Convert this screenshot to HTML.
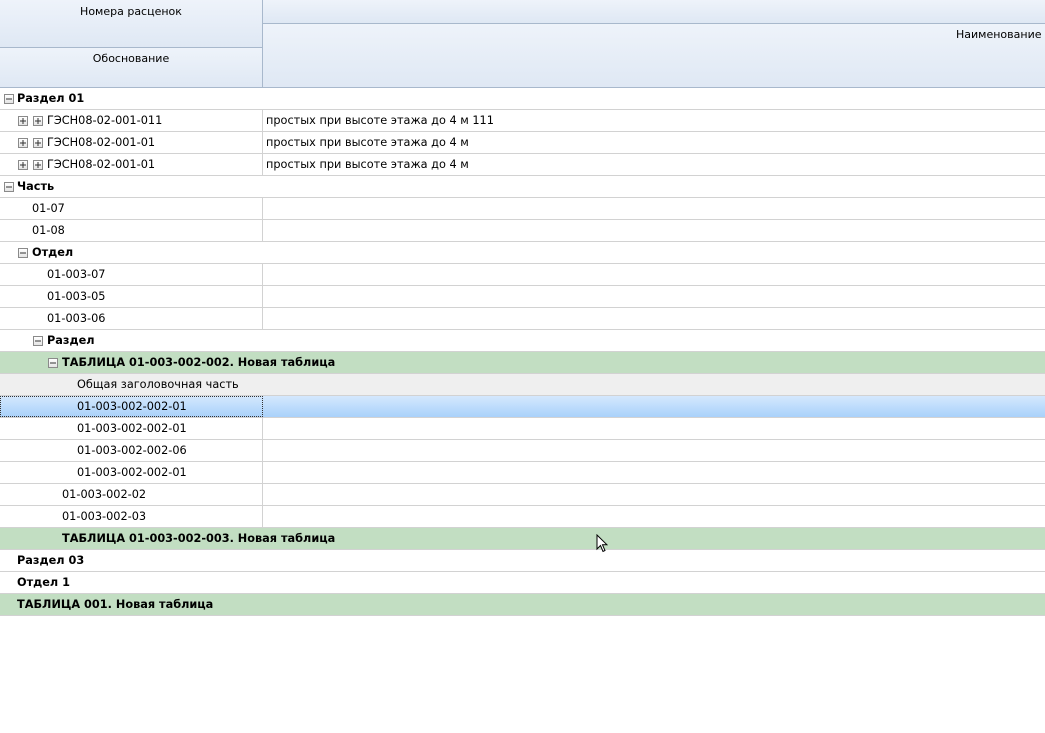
<!DOCTYPE html>
<html><head><meta charset="utf-8"><style>
*{margin:0;padding:0;box-sizing:border-box}
body{width:1045px;height:733px;background:#fff;font-family:"DejaVu Sans","Liberation Sans",sans-serif;font-size:11.3px;color:#000;position:relative;overflow:hidden}
.h{position:absolute;background:linear-gradient(#eef3fa,#dfe8f4);}
.r{position:absolute;left:0;width:1045px;height:22px;border-bottom:1px solid #d2d2d2;line-height:21px;white-space:nowrap}
.d{position:absolute;left:262px;top:0;width:1px;height:21px;background:#d2d2d2}
.b{font-weight:bold}
.t{position:absolute;top:0}
.i{position:absolute;top:6px;width:10px;height:10px;border:1px solid #8a8a8a;background:linear-gradient(#fff,#e4e4e4)}
.i:before{content:"";position:absolute;left:1px;top:3px;width:6px;height:2px;background:#333;transform:scaleY(.5)}
.p:after{content:"";position:absolute;left:3px;top:1px;width:2px;height:6px;background:#333;transform:scaleX(.5)}
.g{background:#c2dec2}
.hl{position:absolute;font-size:11px}
</style></head><body>
<div class="h" style="left:0;top:0;width:262px;height:48px;border-bottom:1px solid #a8b8cc"></div>
<div class="h" style="left:0;top:48px;width:262px;height:40px;border-bottom:1px solid #a8b8cc"></div>
<div class="h" style="left:262px;top:0;width:783px;height:24px;border-left:1px solid #a8b8cc;border-bottom:1px solid #a8b8cc"></div>
<div class="h" style="left:262px;top:24px;width:783px;height:64px;border-left:1px solid #a8b8cc;border-bottom:1px solid #a8b8cc"></div>
<div class="hl" style="left:0;width:262px;top:5px;text-align:center">Номера расценок</div>
<div class="hl" style="left:0;width:262px;top:52px;text-align:center">Обоснование</div>
<div class="hl" style="left:956px;top:28px">Наименование</div>

<div class="r" style="top:88px"><span class="i" style="left:4px"></span><span class="t b" style="left:17px">Раздел 01</span></div>
<div class="r" style="top:110px"><span class="i p" style="left:18px"></span><span class="i p" style="left:33px"></span><span class="t" style="left:47px">ГЭСН08-02-001-011</span><div class="d"></div><span class="t" style="left:266px">простых при высоте этажа до 4 м 111</span></div>
<div class="r" style="top:132px"><span class="i p" style="left:18px"></span><span class="i p" style="left:33px"></span><span class="t" style="left:47px">ГЭСН08-02-001-01</span><div class="d"></div><span class="t" style="left:266px">простых при высоте этажа до 4 м</span></div>
<div class="r" style="top:154px"><span class="i p" style="left:18px"></span><span class="i p" style="left:33px"></span><span class="t" style="left:47px">ГЭСН08-02-001-01</span><div class="d"></div><span class="t" style="left:266px">простых при высоте этажа до 4 м</span></div>
<div class="r" style="top:176px"><span class="i" style="left:4px"></span><span class="t b" style="left:17px">Часть</span></div>
<div class="r" style="top:198px"><span class="t" style="left:32px">01-07</span><div class="d"></div></div>
<div class="r" style="top:220px"><span class="t" style="left:32px">01-08</span><div class="d"></div></div>
<div class="r" style="top:242px"><span class="i" style="left:18px"></span><span class="t b" style="left:32px">Отдел</span></div>
<div class="r" style="top:264px"><span class="t" style="left:47px">01-003-07</span><div class="d"></div></div>
<div class="r" style="top:286px"><span class="t" style="left:47px">01-003-05</span><div class="d"></div></div>
<div class="r" style="top:308px"><span class="t" style="left:47px">01-003-06</span><div class="d"></div></div>
<div class="r" style="top:330px"><span class="i" style="left:33px"></span><span class="t b" style="left:47px">Раздел</span></div>
<div class="r g" style="top:352px"><span class="i" style="left:48px"></span><span class="t b" style="left:62px">ТАБЛИЦА 01-003-002-002. Новая таблица</span></div>
<div class="r" style="top:374px;background:#efefef"><span class="t" style="left:77px">Общая заголовочная часть</span></div>
<div class="r" style="top:396px;background:linear-gradient(#d4e8fd,#a9d1fa)"><div style="position:absolute;left:0;top:0;width:263px;height:21px;border:1px dotted #333"></div><span class="t" style="left:77px">01-003-002-002-01</span></div>
<div class="r" style="top:418px"><span class="t" style="left:77px">01-003-002-002-01</span><div class="d"></div></div>
<div class="r" style="top:440px"><span class="t" style="left:77px">01-003-002-002-06</span><div class="d"></div></div>
<div class="r" style="top:462px"><span class="t" style="left:77px">01-003-002-002-01</span><div class="d"></div></div>
<div class="r" style="top:484px"><span class="t" style="left:62px">01-003-002-02</span><div class="d"></div></div>
<div class="r" style="top:506px"><span class="t" style="left:62px">01-003-002-03</span><div class="d"></div></div>
<div class="r g" style="top:528px"><span class="t b" style="left:62px">ТАБЛИЦА 01-003-002-003. Новая таблица</span></div>
<div class="r" style="top:550px"><span class="t b" style="left:17px">Раздел 03</span></div>
<div class="r" style="top:572px"><span class="t b" style="left:17px">Отдел 1</span></div>
<div class="r g" style="top:594px"><span class="t b" style="left:17px">ТАБЛИЦА 001. Новая таблица</span></div>
<svg style="position:absolute;left:596px;top:534px" width="12" height="19" viewBox="0 0 12 19"><path d="M1 1 L1 15 L4.5 11.5 L7 17.5 L9 16.5 L6.5 10.8 L11 10.8 Z" fill="#fff" stroke="#000" stroke-width="1"/></svg>
</body></html>
